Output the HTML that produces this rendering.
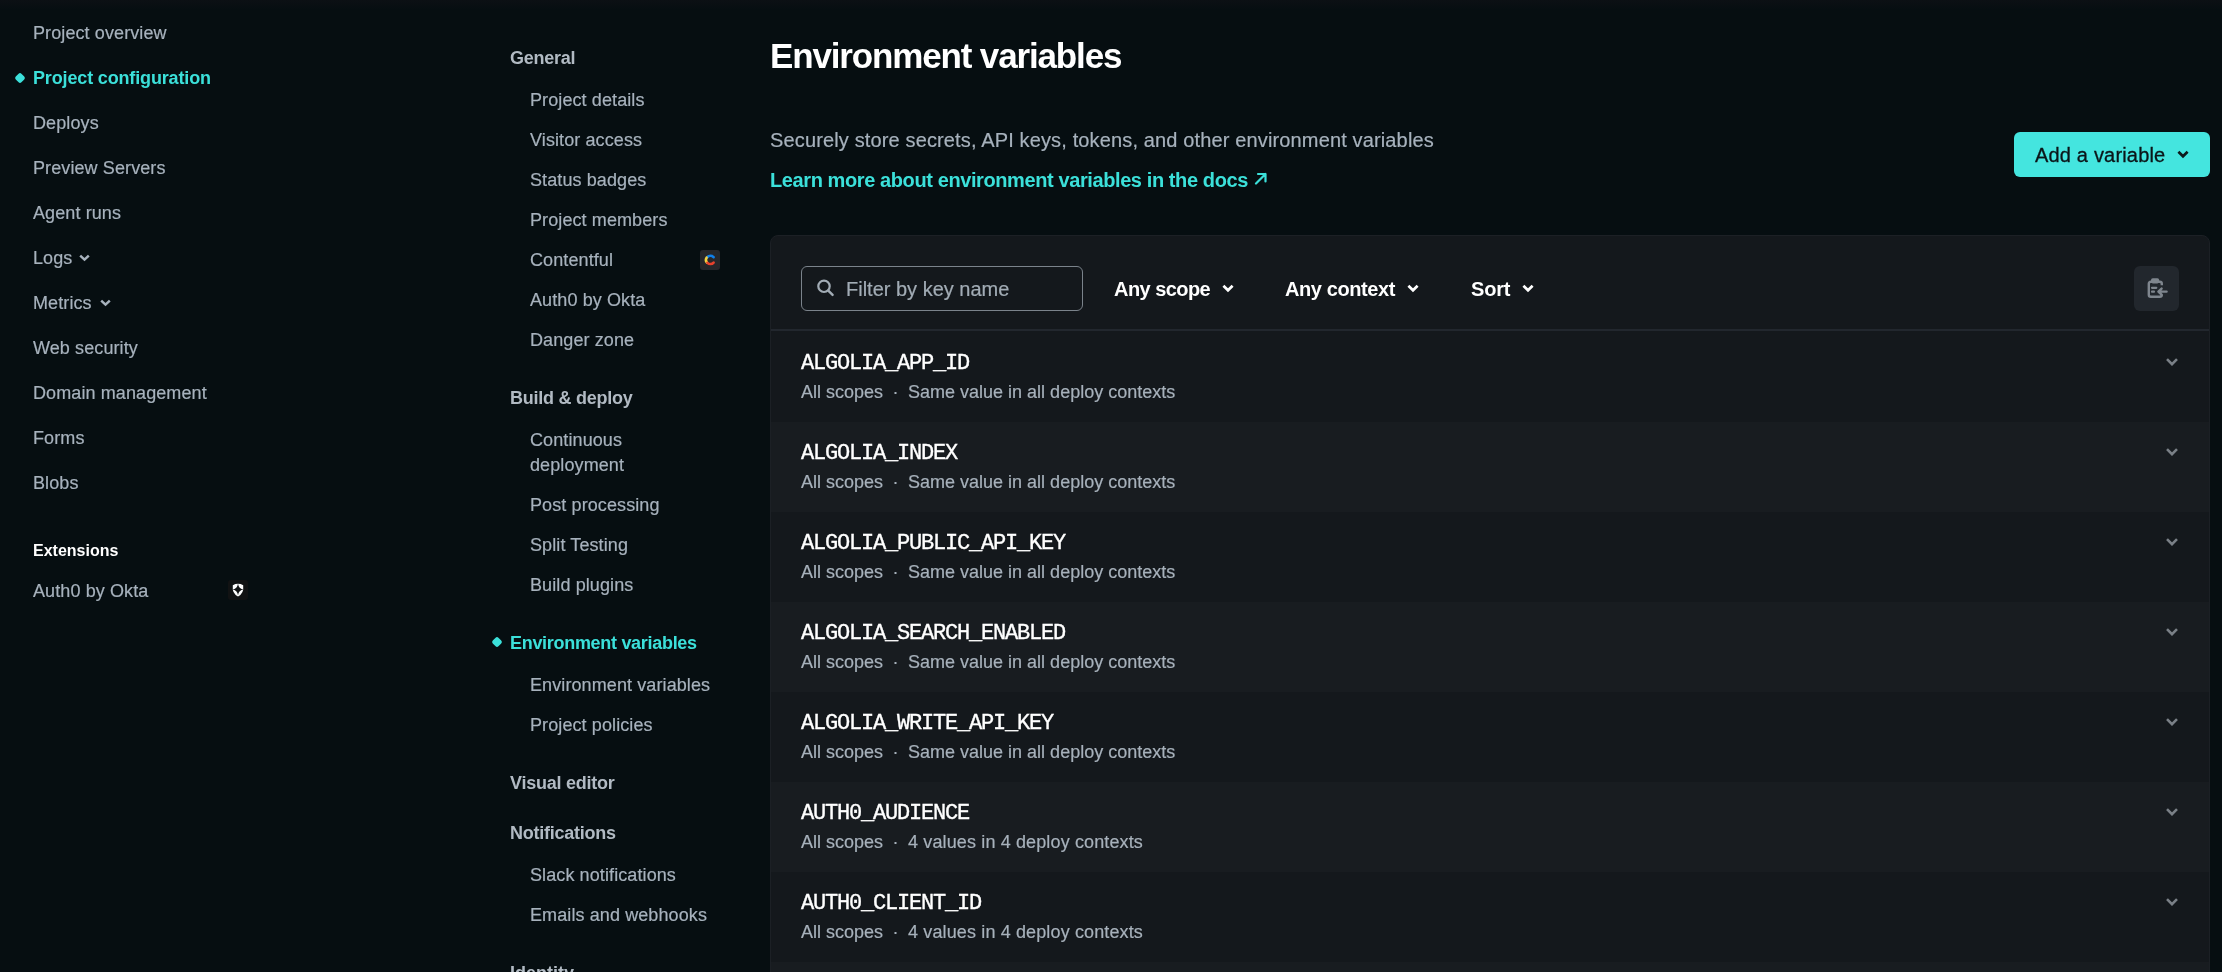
<!DOCTYPE html>
<html><head><meta charset="utf-8">
<style>
*{box-sizing:border-box;margin:0;padding:0}
html,body{width:2222px;height:972px;overflow:hidden;background:#060e11;font-family:"Liberation Sans",sans-serif}
.a{position:absolute;white-space:nowrap;line-height:1}
.nav{font-size:18px;color:#a7b2bd;-webkit-text-stroke:0.2px #a7b2bd;letter-spacing:0.1px}
.act{font-size:18px;font-weight:bold;color:#3be0da;letter-spacing:-0.3px}
.sec{font-size:18px;font-weight:bold;color:#b1bac3;letter-spacing:-0.25px}
.dia{position:absolute;width:8px;height:8px;background:#3be0da;transform:rotate(45deg);border-radius:2px}
.chev{position:absolute}
#topshade{position:absolute;left:0;top:0;width:2222px;height:10px;background:linear-gradient(#0c1014,#060e11)}
.card{position:absolute;left:770px;top:235px;width:1440px;height:760px;background:#14181c;border:1px solid #1c2025;border-radius:8px;overflow:hidden}
.row{position:absolute;left:0;width:1440px;height:90px}
.bgl{position:absolute;left:0;width:1440px;height:90px;background:#181c20}
.vn{position:absolute;left:30px;font-family:"Liberation Mono",monospace;font-size:22px;letter-spacing:-1.2px;color:#fff;-webkit-text-stroke:0.35px #fff;line-height:1;white-space:nowrap}
.dot{display:inline-block;width:25px;text-align:center}
.rch{position:absolute;left:1395px;top:27px}
.vs{position:absolute;left:30px;font-size:18px;color:#a7b1bb;-webkit-text-stroke:0.2px #a7b1bb;line-height:1;white-space:nowrap}
</style></head><body>
<div id="topshade"></div>
<div id="wrap" style="position:absolute;left:0;top:0;width:2222px;height:972px;will-change:transform">

<!-- left sidebar -->
<div class="a nav" style="left:33px;top:24px">Project overview</div>
<div class="dia" style="left:16px;top:74px"></div>
<div class="a act" style="left:33px;top:69px;letter-spacing:-0.15px">Project configuration</div>
<div class="a nav" style="left:33px;top:114px">Deploys</div>
<div class="a nav" style="left:33px;top:159px">Preview Servers</div>
<div class="a nav" style="left:33px;top:204px">Agent runs</div>
<div class="a nav" style="left:33px;top:249px">Logs</div>
<svg style="position:absolute;left:79px;top:254px" width="11" height="8" viewBox="0 0 11 8"><path d="M1.2 1.6L5.5 5.6L9.8 1.6" fill="none" stroke="#a7b2bd" stroke-width="2.5"/></svg>
<div class="a nav" style="left:33px;top:294px">Metrics</div>
<svg style="position:absolute;left:100px;top:299px" width="11" height="8" viewBox="0 0 11 8"><path d="M1.2 1.6L5.5 5.6L9.8 1.6" fill="none" stroke="#a7b2bd" stroke-width="2.5"/></svg>
<div class="a nav" style="left:33px;top:339px">Web security</div>
<div class="a nav" style="left:33px;top:384px">Domain management</div>
<div class="a nav" style="left:33px;top:429px">Forms</div>
<div class="a nav" style="left:33px;top:474px">Blobs</div>
<div class="a" style="left:33px;top:543px;font-size:16px;font-weight:bold;color:#fff">Extensions</div>
<div class="a nav" style="left:33px;top:582px">Auth0 by Okta</div>
<div style="position:absolute;left:228px;top:580px;width:20px;height:20px;background:#111213;border-radius:3px"><svg width="20" height="20" viewBox="0 0 20 20" style="position:absolute;left:0;top:0"><path d="M4.8 5.2 Q7.4 3.8 10 3.8 Q12.6 3.8 15.2 5.2 L15.2 9.8 Q14.8 12.6 12.4 15 L10 16.4 L7.6 15 Q5.2 12.6 4.8 9.8 Z" fill="#fff"/><path d="M10 3.4 Q10.6 8.9 15.8 9.5 Q10.6 10.1 10 15.2 Q9.4 10.1 4.2 9.5 Q9.4 8.9 10 3.4Z" fill="#111213"/></svg></div>

<!-- middle nav -->
<div class="a sec" style="left:510px;top:49px">General</div>
<div class="a nav" style="left:530px;top:91px">Project details</div>
<div class="a nav" style="left:530px;top:131px">Visitor access</div>
<div class="a nav" style="left:530px;top:171px">Status badges</div>
<div class="a nav" style="left:530px;top:211px">Project members</div>
<div class="a nav" style="left:530px;top:251px">Contentful</div>
<div style="position:absolute;left:700px;top:250px;width:20px;height:20px;background:#26272b;border-radius:3px"><svg width="20" height="20" viewBox="0 0 20 20" style="position:absolute;left:0;top:0"><path d="M7.2 7.4 A4.2 4.2 0 0 1 13.6 7.2" fill="none" stroke="#0f7fea" stroke-width="2.6" stroke-linecap="round"/><path d="M6.6 7.6 A4.2 4.2 0 0 0 7 12.6" fill="none" stroke="#f4d03f" stroke-width="2.6" stroke-linecap="round"/><path d="M7.4 12.8 A4.2 4.2 0 0 0 13.6 12.6" fill="none" stroke="#e8412c" stroke-width="2.6" stroke-linecap="round"/></svg></div>
<div class="a nav" style="left:530px;top:291px">Auth0 by Okta</div>
<div class="a nav" style="left:530px;top:331px">Danger zone</div>
<div class="a sec" style="left:510px;top:389px">Build &amp; deploy</div>
<div class="a nav" style="left:530px;top:431px">Continuous</div>
<div class="a nav" style="left:530px;top:456px">deployment</div>
<div class="a nav" style="left:530px;top:496px">Post processing</div>
<div class="a nav" style="left:530px;top:536px">Split Testing</div>
<div class="a nav" style="left:530px;top:576px">Build plugins</div>
<div class="dia" style="left:493px;top:638px"></div>
<div class="a act" style="left:510px;top:634px">Environment variables</div>
<div class="a nav" style="left:530px;top:676px">Environment variables</div>
<div class="a nav" style="left:530px;top:716px">Project policies</div>
<div class="a sec" style="left:510px;top:774px">Visual editor</div>
<div class="a sec" style="left:510px;top:824px">Notifications</div>
<div class="a nav" style="left:530px;top:866px">Slack notifications</div>
<div class="a nav" style="left:530px;top:906px">Emails and webhooks</div>
<div class="a sec" style="left:510px;top:964px;letter-spacing:0">Identity</div>

<!-- main -->
<div class="a" style="left:770px;top:38px;font-size:35px;font-weight:bold;color:#fff;letter-spacing:-1.15px">Environment variables</div>
<div class="a" style="left:770px;top:130px;font-size:20px;color:#a7b2bd;letter-spacing:0.14px;-webkit-text-stroke:0.2px #a7b2bd">Securely store secrets, API keys, tokens, and other environment variables</div>
<div class="a" style="left:770px;top:170px;font-size:20px;font-weight:bold;color:#3be0da;letter-spacing:-0.4px">Learn more about environment variables in the docs</div>
<svg style="position:absolute;left:1254px;top:172px" width="14" height="13" viewBox="0 0 14 13"><path d="M2 11.5L11.5 2M4 2H11.5V9.5" fill="none" stroke="#3be0da" stroke-width="2.2" stroke-linecap="round" stroke-linejoin="round"/></svg>

<div style="position:absolute;left:2014px;top:132px;width:196px;height:45px;background:#44e5df;border-radius:6px"></div>
<div class="a" style="left:2035px;top:145px;font-size:20px;color:#0b1518;-webkit-text-stroke:0.3px #0b1518;letter-spacing:0.18px">Add a variable</div>
<svg style="position:absolute;left:2177px;top:150px" width="12" height="9" viewBox="0 0 12 9"><path d="M1.4 1.8L6 6.3L10.6 1.8" fill="none" stroke="#0e1a1c" stroke-width="2.7"/></svg>

<div class="card">
  <div style="position:absolute;left:30px;top:30px;width:282px;height:45px;border:1px solid #7b838b;border-radius:6px"></div>
  <div class="a" style="left:75px;top:43px;font-size:20px;color:#a2acb5;-webkit-text-stroke:0.2px #a2acb5">Filter by key name</div>
  <svg style="position:absolute;left:46px;top:43px" width="18" height="18" viewBox="0 0 18 18"><circle cx="7" cy="7.3" r="5.7" fill="none" stroke="#a2acb5" stroke-width="2.2"/><path d="M11.3 11.6L15.6 15.9" stroke="#a2acb5" stroke-width="2.4" stroke-linecap="round"/></svg>
  <div class="a" style="left:343px;top:43px;font-size:20px;font-weight:bold;color:#fff;letter-spacing:-0.55px">Any scope</div>
  <svg style="position:absolute;left:451px;top:48px" width="12" height="9" viewBox="0 0 12 9"><path d="M1.4 1.8L6 6.3L10.6 1.8" fill="none" stroke="#fff" stroke-width="2.7"/></svg>
  <div class="a" style="left:514px;top:43px;font-size:20px;font-weight:bold;color:#fff;letter-spacing:-0.4px">Any context</div>
  <svg style="position:absolute;left:636px;top:48px" width="12" height="9" viewBox="0 0 12 9"><path d="M1.4 1.8L6 6.3L10.6 1.8" fill="none" stroke="#fff" stroke-width="2.7"/></svg>
  <div class="a" style="left:700px;top:43px;font-size:20px;font-weight:bold;color:#fff;letter-spacing:-0.2px">Sort</div>
  <svg style="position:absolute;left:751px;top:48px" width="12" height="9" viewBox="0 0 12 9"><path d="M1.4 1.8L6 6.3L10.6 1.8" fill="none" stroke="#fff" stroke-width="2.7"/></svg>
  <div style="position:absolute;left:1363px;top:30px;width:45px;height:45px;background:#22272d;border-radius:6px"><svg style="position:absolute;left:13px;top:12px" width="22" height="22" viewBox="0 0 22 22"><path d="M14.8 7.2V5.8Q14.8 3.8 12.8 3.8H3.8Q1.8 3.8 1.8 5.8V16.8Q1.8 18.8 3.8 18.8H12.8Q14.8 18.8 14.8 16.8V16.6" fill="none" stroke="#7f868e" stroke-width="2.4"/><rect x="4" y="0.2" width="8.2" height="5.2" rx="1.8" fill="#7f868e"/><path d="M5 9.8H9.3M5 13.7H7" stroke="#7f868e" stroke-width="2.2" stroke-linecap="round"/><path d="M19.6 13.6H11.8M14.6 10.6L11.4 13.6L14.6 16.6" fill="none" stroke="#7f868e" stroke-width="2.4" stroke-linecap="round" stroke-linejoin="round"/></svg></div>
  <div style="position:absolute;left:0;top:93px;width:1440px;height:2px;background:#22272e"></div>
  <div class="bgl" style="top:186px"></div>
  <div class="bgl" style="top:366px"></div>
  <div class="bgl" style="top:546px"></div>
  <div class="bgl" style="top:726px"></div>
  <div class="row" style="top:95px">
    <div class="vn" style="top:22px">ALGOLIA_APP_ID</div>
    <div class="vs" style="top:52px">All scopes<span class="dot">&middot;</span>Same value in all deploy contexts</div>
    <svg class="rch" width="12" height="8" viewBox="0 0 12 8"><path d="M1 1.2L6 6.2L11 1.2" fill="none" stroke="#7a8087" stroke-width="2.6"/></svg>
  </div>
  <div class="row" style="top:185px">
    <div class="vn" style="top:22px">ALGOLIA_INDEX</div>
    <div class="vs" style="top:52px">All scopes<span class="dot">&middot;</span>Same value in all deploy contexts</div>
    <svg class="rch" width="12" height="8" viewBox="0 0 12 8"><path d="M1 1.2L6 6.2L11 1.2" fill="none" stroke="#7a8087" stroke-width="2.6"/></svg>
  </div>
  <div class="row" style="top:275px">
    <div class="vn" style="top:22px">ALGOLIA_PUBLIC_API_KEY</div>
    <div class="vs" style="top:52px">All scopes<span class="dot">&middot;</span>Same value in all deploy contexts</div>
    <svg class="rch" width="12" height="8" viewBox="0 0 12 8"><path d="M1 1.2L6 6.2L11 1.2" fill="none" stroke="#7a8087" stroke-width="2.6"/></svg>
  </div>
  <div class="row" style="top:365px">
    <div class="vn" style="top:22px">ALGOLIA_SEARCH_ENABLED</div>
    <div class="vs" style="top:52px">All scopes<span class="dot">&middot;</span>Same value in all deploy contexts</div>
    <svg class="rch" width="12" height="8" viewBox="0 0 12 8"><path d="M1 1.2L6 6.2L11 1.2" fill="none" stroke="#7a8087" stroke-width="2.6"/></svg>
  </div>
  <div class="row" style="top:455px">
    <div class="vn" style="top:22px">ALGOLIA_WRITE_API_KEY</div>
    <div class="vs" style="top:52px">All scopes<span class="dot">&middot;</span>Same value in all deploy contexts</div>
    <svg class="rch" width="12" height="8" viewBox="0 0 12 8"><path d="M1 1.2L6 6.2L11 1.2" fill="none" stroke="#7a8087" stroke-width="2.6"/></svg>
  </div>
  <div class="row" style="top:545px">
    <div class="vn" style="top:22px">AUTH0_AUDIENCE</div>
    <div class="vs" style="top:52px">All scopes<span class="dot">&middot;</span><span style="letter-spacing:0.13px">4 values in 4 deploy contexts</span></div>
    <svg class="rch" width="12" height="8" viewBox="0 0 12 8"><path d="M1 1.2L6 6.2L11 1.2" fill="none" stroke="#7a8087" stroke-width="2.6"/></svg>
  </div>
  <div class="row" style="top:635px">
    <div class="vn" style="top:22px">AUTH0_CLIENT_ID</div>
    <div class="vs" style="top:52px">All scopes<span class="dot">&middot;</span><span style="letter-spacing:0.13px">4 values in 4 deploy contexts</span></div>
    <svg class="rch" width="12" height="8" viewBox="0 0 12 8"><path d="M1 1.2L6 6.2L11 1.2" fill="none" stroke="#7a8087" stroke-width="2.6"/></svg>
  </div>
  <div class="row" style="top:725px">
    <div class="vn" style="top:22px">AUTH0_DOMAIN</div>
    <div class="vs" style="top:52px">All scopes<span class="dot">&middot;</span><span style="letter-spacing:0.13px">4 values in 4 deploy contexts</span></div>
    <svg class="rch" width="12" height="8" viewBox="0 0 12 8"><path d="M1 1.2L6 6.2L11 1.2" fill="none" stroke="#7a8087" stroke-width="2.6"/></svg>
  </div>
</div>
</div>
</body></html>
